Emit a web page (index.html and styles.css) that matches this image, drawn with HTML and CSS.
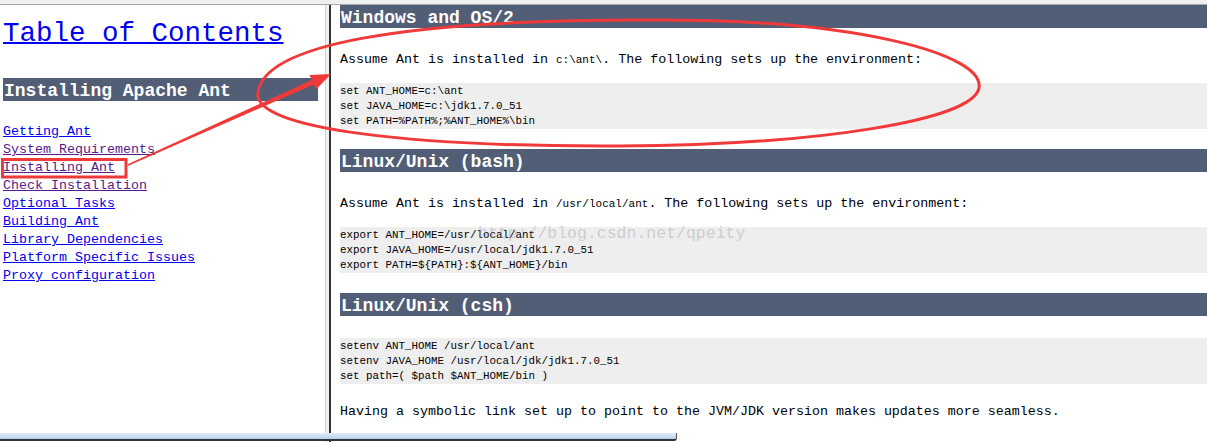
FILE: index.html
```html
<!DOCTYPE html>
<html lang="en">
<head>
<meta charset="utf-8">
<title>Installing Apache Ant</title>
<link rel="stylesheet" href="styles.css">
</head>
<body>
<div class="screen">
  <div class="topstrip"></div>
  <div class="frames">
    <nav class="toc">
      <a class="toc-title" href="#">Table of Contents</a>
      <h3 class="bar toc-bar">Installing Apache Ant</h3>
      <ul class="toc-links">
        <li><a href="#">Getting Ant</a></li>
        <li><a class="visited" href="#">System Requirements</a></li>
        <li><a class="visited" href="#">Installing Ant</a></li>
        <li><a class="visited" href="#">Check Installation</a></li>
        <li><a href="#">Optional Tasks</a></li>
        <li><a href="#">Building Ant</a></li>
        <li><a href="#">Library Dependencies</a></li>
        <li><a href="#">Platform Specific Issues</a></li>
        <li><a href="#">Proxy configuration</a></li>
      </ul>
    </nav>
    <div class="divider"></div>
    <main class="content">
      <h3 class="bar">Windows and OS/2</h3>
      <p class="lead">Assume Ant is installed in <code>c:\ant\</code>. The following sets up the environment:</p>
      <pre class="code">set ANT_HOME=c:\ant
set JAVA_HOME=c:\jdk1.7.0_51
set PATH=%PATH%;%ANT_HOME%\bin</pre>

      <h3 class="bar">Linux/Unix (bash)</h3>
      <p class="lead">Assume Ant is installed in <code>/usr/local/ant</code>. The following sets up the environment:</p>
      <pre class="code">export ANT_HOME=/usr/local/ant
export JAVA_HOME=/usr/local/jdk1.7.0_51
export PATH=${PATH}:${ANT_HOME}/bin</pre>

      <h3 class="bar">Linux/Unix (csh)</h3>
      <pre class="code after-head">setenv ANT_HOME /usr/local/ant
setenv JAVA_HOME /usr/local/jdk/jdk1.7.0_51
set path=( $path $ANT_HOME/bin )</pre>
      <p class="note">Having a symbolic link set up to point to the JVM/JDK version makes updates more seamless.</p>
    </main>
  </div>
  <div class="taskbar"></div>
  <div class="watermark">http://blog.csdn.net/qpeity</div>
  <svg class="annot" width="1207" height="442" viewBox="0 0 1207 442">
    <rect x="2.5" y="159.5" width="123.5" height="17.5" fill="none" stroke="#f03a3a" stroke-width="3"/>
    <polygon fill="#f03a3a" points="127.7,164.3 311.8,79.9 309.5,74.9 331,74 316.1,89.5 313.8,84.5 128.3,165.7"/>
    <path d="M258 92 C265 45 400 20 640 20 C860 18 985 55 979 88 C973 120 820 145 620 146 C420 147 250 130 258 92 Z" fill="none" stroke="#f03a3a" stroke-width="3"/>
  </svg>
</div>
</body>
</html>
```

FILE: styles.css
```css
html, body {
  margin: 0;
  padding: 0;
  background: #ffffff;
}

.screen {
  position: relative;
  width: 1207px;
  height: 442px;
  overflow: hidden;
  background: #ffffff;
  font-family: "Liberation Mono", "DejaVu Sans Mono", monospace;
  color: #000000;
}

.topstrip {
  height: 4px;
  background: #f0f0f0;
  border-bottom: 1px solid #a8a8a8;
}

.frames {
  display: flex;
  height: 437px;
}

.toc {
  width: 315px;
  flex: none;
  padding: 0 7px 0 3px;
  border-right: 1px solid #cfcfcf;
}

.divider {
  width: 3px;
  flex: none;
  background: #f2f2f2;
  border-right: 2px solid #333333;
}

.content {
  flex: 1;
  min-width: 0;
  padding-left: 9px;
}

.toc-title {
  display: block;
  width: max-content;
  margin-top: 13px;
  font-size: 27.5px;
  line-height: 32px;
  color: #0000ee;
  text-decoration: underline;
  text-decoration-thickness: 2px;
}

.bar {
  margin: 0;
  height: 23px;
  box-sizing: border-box;
  padding: 3px 0 0 1px;
  background: #525d76;
  color: #ffffff;
  font-size: 18px;
  line-height: 20px;
  font-weight: bold;
  white-space: nowrap;
}

.toc-bar {
  margin-top: 28px;
}

.toc-links {
  list-style: none;
  margin: 22px 0 0;
  padding: 0;
  font-size: 13.33px;
  line-height: 18px;
}

.toc-links a {
  color: #0000ee;
  text-decoration: underline;
}

.toc-links a.visited {
  color: #551a8b;
}

.lead,
.note {
  font-size: 13.33px;
  line-height: 16px;
  white-space: nowrap;
}

.lead {
  margin: 24px 0 15px;
}

.note {
  margin: 0;
}

.lead code {
  font-family: "Liberation Mono", monospace;
  font-size: 11px;
}

.code {
  margin: 0 0 20px;
  padding: 1px 0 0;
  background: #eeeeee;
  font-family: "Liberation Mono", monospace;
  font-size: 10.83px;
  line-height: 15px;
}

.code.after-head {
  margin-top: 22px;
}

.taskbar {
  position: absolute;
  left: 0;
  bottom: 1px;
  width: 676px;
  height: 6px;
  background: linear-gradient(#e2eef9, #b5d0eb);
  border-bottom: 2px solid #333333;
  border-right: 1px solid #555555;
  border-radius: 0 0 3px 0;
}

.watermark {
  position: absolute;
  left: 478px;
  top: 224px;
  font-family: "Liberation Mono", monospace;
  font-size: 16.5px;
  line-height: 20px;
  color: rgba(150, 150, 150, 0.4);
  white-space: nowrap;
}

.annot {
  position: absolute;
  left: 0;
  top: 0;
  pointer-events: none;
}
```
